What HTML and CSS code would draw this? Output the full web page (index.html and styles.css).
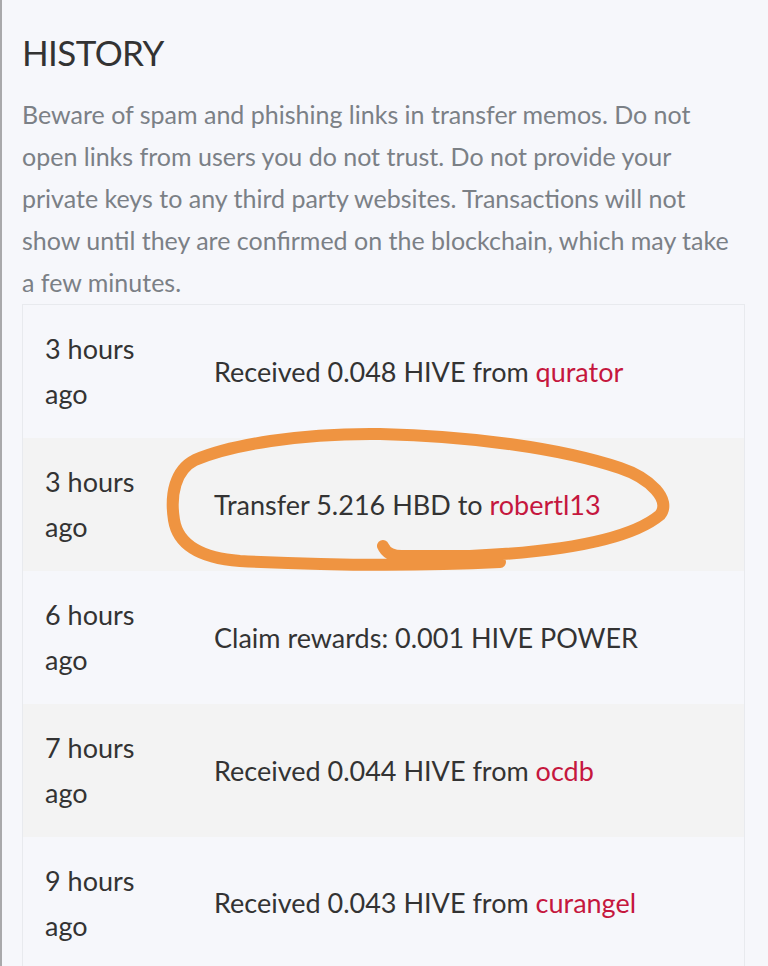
FILE: index.html
```html
<!DOCTYPE html>
<html>
<head>
<meta charset="utf-8">
<link rel="stylesheet" href="styles.css">
</head>
<body>
<div class="page">
  <h2 class="title">HISTORY</h2>
  <p class="warning">Beware of spam and phishing links in transfer memos. Do not open links from users you do not trust. Do not provide your private keys to any third party websites. Transactions will not show until they are confirmed on the blockchain, which may take a few minutes.</p>
  <div class="table-wrap">
    <table class="history">
      <tbody>
        <tr><td class="time">3 hours ago</td><td class="desc">Received 0.048 HIVE from <a href="#">qurator</a></td></tr>
        <tr class="alt"><td class="time">3 hours ago</td><td class="desc">Transfer 5.216 HBD to <a href="#">robertl13</a></td></tr>
        <tr><td class="time">6 hours ago</td><td class="desc">Claim rewards: 0.001 HIVE POWER</td></tr>
        <tr class="alt"><td class="time">7 hours ago</td><td class="desc">Received 0.044 HIVE from <a href="#">ocdb</a></td></tr>
        <tr><td class="time">9 hours ago</td><td class="desc">Received 0.043 HIVE from <a href="#">curangel</a></td></tr>
      </tbody>
    </table>
    <svg class="scribble" width="768" height="966" viewBox="0 0 768 966">
      <path d="M383 546 C386 553 392 556 402 556 L470 556 C560 552 630 540 660 515 C672 500 650 478 620 468 C560 448 470 436 380 434 C300 433 230 445 195 460 C175 470 170 495 174 520 C178 545 200 558 240 561 C320 565 420 566 500 562" fill="none" stroke="#ef9441" stroke-width="12" stroke-linecap="round" stroke-linejoin="round"/>
    </svg>
  </div>
</div>
</body>
</html>
```

FILE: styles.css
```css
html, body {
  margin: 0;
  padding: 0;
}
body {
  background: #f6f7fb;
  border-left: 2px solid #a9a9ab;
  font-family: Lato, "Source Sans Pro", "Noto Sans", sans-serif;
  min-height: 966px;
  box-sizing: border-box;
}
.page {
  padding: 32px 23px 0 20px;
}
.title {
  margin: 0;
  font-size: 35px;
  font-weight: 400;
  color: #333;
  line-height: 40px;
  letter-spacing: -0.6px;
}
.warning {
  margin: 21px 0 0 0;
  font-size: 25px;
  line-height: 42px;
  color: #7b8086;
}
.table-wrap {
  position: relative;
  margin-top: 1px;
}
.history {
  width: 100%;
  border-collapse: collapse;
  border: 1px solid #e8eaee;
  font-size: 27px;
  color: #333;
}
.history tr {
  height: 133px;
}
.history tr.alt {
  background: #f3f3f3;
}
.time {
  width: 126px;
  padding: 0 22px;
  line-height: 45px;
  vertical-align: middle;
}
.desc {
  padding: 0 0 0 21px;
  vertical-align: middle;
}
.desc a {
  color: #c5173e;
  text-decoration: none;
}
.scribble {
  position: absolute;
  left: -22px;
  top: -304px;
  pointer-events: none;
}
```
